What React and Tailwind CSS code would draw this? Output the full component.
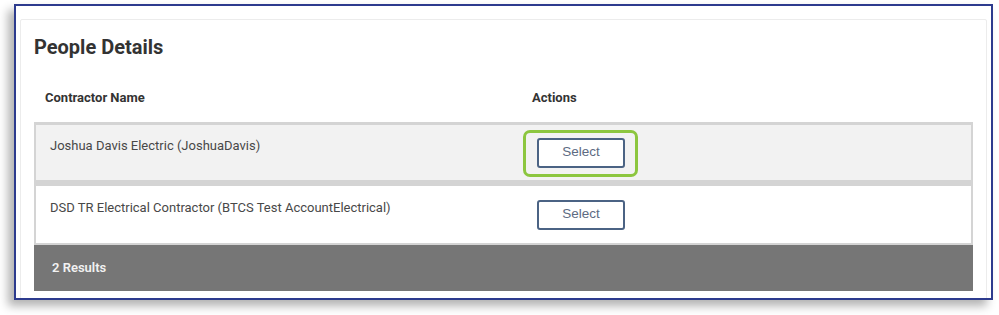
import React from 'react';

const rows = [
  { name: 'Joshua Davis Electric (JoshuaDavis)', highlighted: true },
  { name: 'DSD TR Electrical Contractor (BTCS Test AccountElectrical)', highlighted: false },
];

function SelectButton({ highlighted }) {
  return (
    <div className="relative w-[88px] h-[30px]">
      {highlighted && (
        <div className="absolute -left-[14px] -top-[8px] -right-[13px] -bottom-[9px] border-[3px] border-[#8cc63f] rounded-[7px]"></div>
      )}
      <button
        className="relative w-full h-full bg-white border-2 border-[#4b6384] rounded-[3px] text-[13.5px] text-[#5d6b82]"
        style={{ fontFamily: '"Liberation Sans", Arial, sans-serif' }}
      >
        Select
      </button>
    </div>
  );
}

export default function App() {
  return (
    <div className="w-[999px] h-[315px] bg-white pt-[4px] pl-[14px]" style={{ fontFamily: 'Roboto, "Noto Sans", sans-serif' }}>
      {/* Рамка */}
      <div className="w-[979px] h-[296px] border-2 border-[#2d3b8e] bg-white overflow-hidden shadow-[-6px_6px_9px_rgba(0,0,0,0.3)] pt-[13px] px-[4px]">
        <div className="h-[300px] border border-[#ececec] rounded-[2px] pt-[15px] px-[13px]">
          <h2 className="h-[24px] leading-[24px] text-[20px] font-bold text-[#333]">People Details</h2>

          {/* Заголовки */}
          <div className="mt-[27px] h-[24px] grid grid-cols-[498px_1fr] items-center text-[13px] font-bold text-[#333]">
            <div className="pl-[11px]">Contractor Name</div>
            <div>Actions</div>
          </div>

          {/* Строки */}
          <div className="mt-[12px]">
            <div className="h-[61px] bg-[#f2f2f2] border-x-2 border-t-[3px] border-b-[3px] border-[#d4d4d4] grid grid-cols-[496px_1fr]">
              <div className="pl-[14px] pt-[13px] text-[13px] leading-[16px] text-[#484848]">{rows[0].name}</div>
              <div className="pl-[5px] flex items-center">
                <SelectButton highlighted />
              </div>
            </div>
            <div className="h-[62px] bg-white border-x-2 border-t-[3px] border-b-2 border-[#d4d4d4] grid grid-cols-[496px_1fr]">
              <div className="pl-[14px] pt-[14px] text-[13px] leading-[16px] text-[#484848]">{rows[1].name}</div>
              <div className="pl-[5px] flex items-center">
                <SelectButton />
              </div>
            </div>
            <div className="h-[46px] bg-[#767676] flex items-center pl-[18px] text-[13px] font-semibold text-[#f2f2f2]">
              2 Results
            </div>
          </div>
        </div>
      </div>
    </div>
  );
}
